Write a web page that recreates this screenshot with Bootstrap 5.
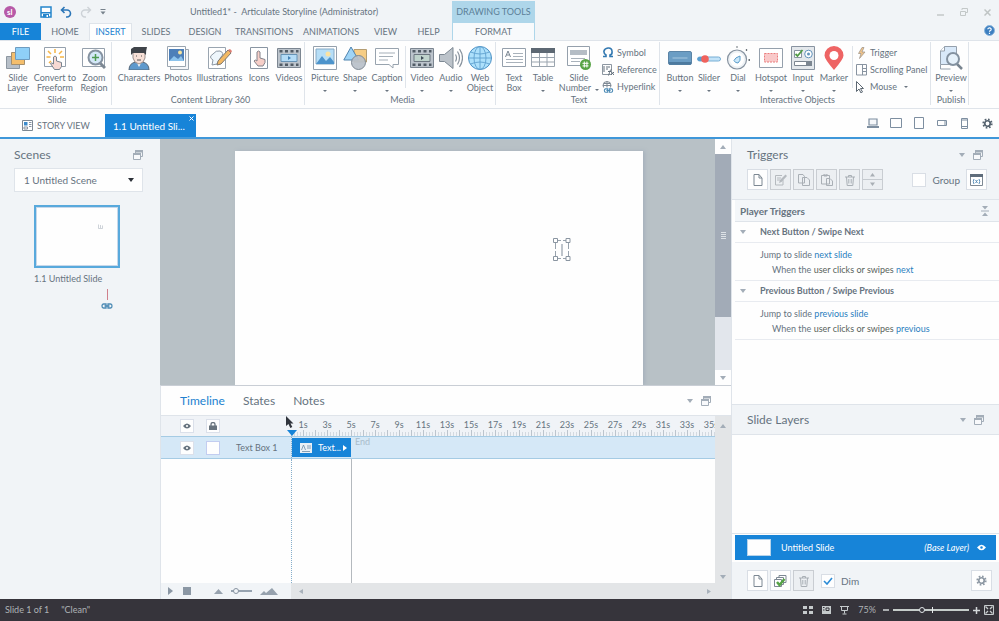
<!DOCTYPE html>
<html lang="en">
<head>
<meta charset="utf-8">
<meta name="viewport" content="width=device-width, initial-scale=1">
<title>Untitled1* - Articulate Storyline</title>
<link href="https://cdn.jsdelivr.net/npm/bootstrap@5.3.0/dist/css/bootstrap.min.css" rel="stylesheet">
<style>
:root{--ink:#66737f;--blue:#1784d8;--pane:#f1f4f7;--line:#dfe4ea;--mute:#a3adb8}
body{font-family:Lato,"Open Sans",sans-serif;font-size:9px;line-height:10px;color:var(--ink);background:#fefefe;overflow:hidden}
button,select,input{font:inherit;color:inherit}
button{background:none;border:0;padding:0;line-height:inherit}
svg{display:block;flex:none}
h1,h2,h3,p{font-size:inherit;margin:0;line-height:inherit;font-weight:inherit}
a{text-decoration:none;color:#2b7fc0}
.app-top{background:var(--pane);border-bottom:1px solid var(--line)}
.bar-title{height:23px}
.bar-tabs{height:16px}
.rtab{height:17px;color:var(--ink);text-align:center;position:relative;white-space:nowrap}
.rtab.file{background:var(--blue);color:#fff}
.rtab.on{background:#fefefe;color:#2181d0;border:1px solid var(--line);border-bottom:0}
.t40{width:41px}.t43{width:43px}.t48{width:48px}.t50{width:50px}.t66{width:66px}.t68{width:68px}
.main-head{width:452px}
.ctx{width:83px}
.ctx-name{height:22px;margin-top:1px;background:#aed6ea;color:#5b7f98}
.ctx-tab{height:17px;border:solid #aed6ea;border-width:0 1px;background:#f8fafc}
.quick{width:190px}
.ribbon{height:68px;border-bottom:1px solid var(--line)}
.grp{border-right:1px solid var(--line);padding:2px 0 0 3px;margin:1px 0 3px;flex:none}
.grp.wide{padding-left:5px}
.grp-name{margin-top:auto;text-align:center}
.rb{display:flex;flex-direction:column;align-items:center;white-space:nowrap;gap:3px;padding-top:2px}
.rb span{display:block}
.w28{width:28px}.w30{width:30px}.w33{width:34px}.w38{width:36px}.w44{width:44px}.w48{width:49px}
.car{width:0;height:0;border:2px solid transparent;border-top:2px solid #6a7580;border-bottom:0;display:inline-block}
.car.lg{border-width:3px;border-top-width:4px;border-top-color:var(--mute)}
.rb .car{margin-top:4px}
.small-cmd{display:flex;align-items:center;gap:3px;height:17px;white-space:nowrap}
.cmds{width:58px;padding-left:1px}
.cmds.wide-c{width:76px;padding-left:2px}
.rule{width:1px;background:var(--line);height:42px;margin:2px 1px 0}
.docs{height:30px;border-bottom:2px solid #3f97d9}
.doc-off{margin:0 15px 6px 22px}
.doc-on{background:var(--blue);color:#fff;width:91px;height:23px;font-size:10px}
.doc-x{top:2px;right:2px}
.devices{display:grid;grid-template-columns:repeat(6,23px);justify-items:center;align-items:center}
.left{width:160px;background:var(--pane);padding:8px 17px 0 14px}
.right{width:268px;background:#fefefe;border-left:1px solid var(--line)}
.pane-t{font-size:12px;line-height:16px}
.scene{width:100%;height:24px;border:1px solid var(--line);background:#fefefe;font-size:10px;padding:0 9px;appearance:none}
.scene-car{right:9px;top:10px;border-width:4px;border-top:4px solid #2c3038;border-bottom:0;border-left-width:3px;border-right-width:3px;pointer-events:none}
.scene-box{margin:5px 0 13px}
.thumbs{padding:0 22px 0 20px}
.thumb{width:86px;height:63px;border:2px solid #58a9dc;background:#fefefe;box-shadow:inset 0 0 0 1px #c8d8ea}
.thumb svg{left:75%;top:28%}
.thumb-t{padding:6px 0 5px}
.stage{height:246px}
.canvas{background:#b8c1c6;padding:12px 72px 0 75px}
.slide{background:#fefefe;box-shadow:2px 0 4px #a6b1bc}
.pick{left:78%;top:37%}
.mid{min-width:0}
.vbar{width:16px;background:#e2e6ec}
.vbar button{height:15px;background:#fefefe;width:100%}
.vthumb{background:#a2abb7;height:163px;width:100%}
.tri-u{width:0;height:0;border:3px solid transparent;border-bottom:4px solid var(--mute);border-top:0}
.tl{border-top:1px solid #c9ced5;border-left:1px solid var(--line)}
.tl-head{height:30px;border-bottom:1px solid var(--line)}
.tl-tabs{gap:18px;padding-left:19px}
.tl-tabs button{font-size:12px;line-height:16px}
.tl-tabs .cur{color:#2181d0}
.tl-side{width:130px;flex:none}
.rowhead{padding-left:19px;gap:12px}
.tl-rule{height:20px;background:#f0f3f7}
.ticks{height:6px;background:repeating-linear-gradient(90deg,#bcc4cd 0 1px,transparent 1px 12px),linear-gradient(#f0f3f7 0 2px,transparent 2px),repeating-linear-gradient(90deg,#d3d9e0 0 1px,transparent 1px 3px)}
.marks{display:grid;grid-template-columns:repeat(18,24px);text-align:center;padding-top:4px;height:14px}
.clip-x{overflow-x:clip;min-width:0}
.tl-row{height:23px;background:#d5e8f7;border:solid #a5cbe4;border-width:1px 0}
.sq{width:14px;height:14px;background:#fefefe;border:1px solid #dbe0ea;display:flex;align-items:center;justify-content:center;flex:none}
.sq.lav{border-color:#c3cdf0;appearance:none;margin:0}
.clip{width:59px;height:19px;margin-top:1px;background:var(--blue);color:#fff}
.track{border-left:1px dotted #86aecb}
.end-t{color:#a9bccb}
.life{width:60px;border-right:1px solid #b4b9be}
.head-mark{left:-4px;bottom:0;width:0;height:0;border:5px solid transparent;border-top:6px solid var(--blue);border-bottom:0}
.arrow{left:125px;top:30px;z-index:3}
.tl-side2{width:16px;flex:none;background:#e3e5e7;color:var(--mute)}
.tl-foot{height:16px;background:var(--pane)}
.tl-tools{padding-left:7px;gap:8px}
.stop-b{margin:0 15px 0 2px}
.hscroll{background:#e3e5e7}
.tbtn{width:21px;height:21px;border:1px solid #d9dee5;background:#fefefe;display:flex;align-items:center;justify-content:center;flex:none}
.tbtn.off{background:#eceff2;border-color:#c9cdd2}
.tools{gap:2px}
.trig-h{height:61px;background:var(--pane);border-bottom:1px solid var(--line);padding:8px 12px 0 15px}
.trig-row{margin-top:6px}
.trig-name{height:22px;background:#f3f6f9;border-bottom:1px solid var(--line);margin-left:3px;padding:0 10px 0 5px;font-size:10px;font-weight:700}
.trig-ev{height:21px;border-bottom:1px solid #e8ebf0;margin-left:3px;font-weight:700;padding-left:5px;gap:14px}
.trig-do{height:38px;border-bottom:1px solid #e8ebf0;margin-left:3px;line-height:15px;padding:4px 0 0 25px}
.grow{color:#59635c}
.lay-h{height:31px;background:var(--pane);border:solid var(--line);border-width:1px 0;padding:0 15px}
.lay-space{height:99px;border-bottom:1px solid var(--line)}
.lay-on{--hole:#1784d8;height:25px;margin:1px 3px 2px;padding:0 10px 0 12px;background:var(--blue);color:#fff}
.lay-th{width:24px;height:17px;background:#fefefe;border:1px solid #b7d3ea;margin-right:10px;flex:none}
.lay-f{height:37px;background:var(--pane);padding:0 7px 0 15px}
.tick-box{appearance:none;width:14px;height:14px;border:1px solid #d9dee5;background:#fefefe;margin:0}
.tick-over{left:2px;top:3px;pointer-events:none}
.dim-g{gap:6px;margin-left:5px;font-size:10px}
.soft{color:#8e99a4}
.dark{color:#56636f}
.status{height:22px;background:#36343b;color:#aeb3b6;padding:0 5px;gap:12px}
.views{gap:9px}
.zooms{gap:4px;margin-left:-5px}
input[type=range]{appearance:none;background:none;height:8px;margin:0;padding:0}
input[type=range]::-webkit-slider-runnable-track{height:2px;background:#c6cdca}
input[type=range]::-webkit-slider-thumb{appearance:none;width:6px;height:6px;border:1px solid #dfe4e6;border-radius:50%;background:#36343b;margin-top:-2px}
.zoom-r{width:76px}
.zoom-mid{left:39px;top:1px;width:1px;height:6px;background:#e8eaec}
input.tl-z{width:21px}
input.tl-z::-webkit-slider-runnable-track{background:#97a3b0}
input.tl-z::-webkit-slider-thumb{border:1px solid #8793a0;background:#f1f4f8}
</style>
<script src="https://cdn.jsdelivr.net/npm/bootstrap@5.3.0/dist/js/bootstrap.bundle.min.js"></script>
</head>
<body class="vh-100 d-flex flex-column">
<svg width="0" height="0" class="position-absolute">
<defs>
<symbol id="i-win" viewBox="0 0 10 10"><path d="M2.500 3V.5h7v6H8M2.500 2h7" fill="none" stroke="#a3adb8"/><path d="M.5 3.500h7v6h-7z" fill="#f8f9fb" stroke="#a3adb8"/><path d="M0 3h8v2H0zM2 0h8v2H2z" fill="#a3adb8"/></symbol>
<symbol id="i-eye" viewBox="0 0 8 6"><path d="M0 3Q4-2 8 3Q4 8 0 3Z" fill="currentColor"/><circle cx="4" cy="3" r="1.100" fill="var(--hole,#fff)"/></symbol>
<symbol id="i-page" viewBox="0 0 12 12"><path d="M2 .5h5L10 4v7.500H2zM7 .5V4h3" fill="none" stroke="#7d8893"/></symbol>
<symbol id="i-bin" viewBox="0 0 12 12"><path d="M1 3h10M4.500 3V1.500h3V3M2.500 3l.7 8.500h5.600l.7-8.500M4.800 5v4.500M7.200 5v4.500" fill="none" stroke="#a9afb5"/></symbol>
<symbol id="i-link" viewBox="0 0 12 6"><path d="M5 1H2.500a1.500 2 0 0 0 0 4H5zM7 1h2.500a1.500 2 0 0 1 0 4H7zM3.500 3h5" fill="none" stroke="#4d8bb5" stroke-width="1.300"/></symbol>
<symbol id="i-film" viewBox="0 0 24 24"><path d="M.5 2.500h23v19H.5z" fill="#bcc4cc" stroke="#7c8691"/><path d="M2.500 4h3v2.500h-3zM8 4h3v2.500H8zM13.500 4h3v2.500h-3zM19 4h2.500v2.500H19zM2.500 17.500h3V20h-3zM8 17.500h3V20H8zM13.500 17.500h3V20h-3zM19 17.500h2.500V20H19z" fill="#525c66"/></symbol>
<symbol id="i-gear" viewBox="0 0 12 12"><circle cx="6" cy="6" r="4.600" fill="none" stroke="currentColor" stroke-width="2" stroke-dasharray="1.800 1.810"/><circle cx="6" cy="6" r="3" fill="none" stroke="currentColor" stroke-width="1.900"/></symbol>
</defs>
</svg>

<header class="app-top d-flex">
  <div class="main-head">
    <div class="bar-title d-flex align-items-center">
      <div class="quick d-flex align-items-center ps-1">
        <svg width="12" height="12" viewBox="0 0 12 12"><circle cx="6" cy="6" r="6" fill="#b75aa8"/><text x="3" y="9" font-size="8" font-weight="700" fill="#fff">sl</text></svg>
        <button class="ms-4" aria-label="Save"><svg width="12" height="12" viewBox="0 0 12 12"><path d="M1 1h10v10H1z" fill="#fff" stroke="#2585cc" stroke-width="1.500"/><path d="M1 6h10v1.500H1zM3 8h6v3.500H3z" fill="#2585cc"/><path d="M6.500 9h1.500v2H6.500z" fill="#fff"/></svg></button>
        <button class="ms-2" aria-label="Undo"><svg width="12" height="12" viewBox="0 0 12 12"><path d="M4.500 1L1.500 4l3 3M2 4h5a3.500 3.500 0 0 1 0 7H6" fill="none" stroke="#2c76b8" stroke-width="1.600"/></svg></button>
        <button class="ms-2" aria-label="Redo"><svg width="12" height="12" viewBox="0 0 12 12"><path d="M7.500 1l3 3-3 3M10 4H5a3.500 3.500 0 0 0 0 7h1" fill="none" stroke="#cdd2d7" stroke-width="1.400"/></svg></button>
        <button class="ms-2" aria-label="Customize toolbar"><svg width="6" height="6" viewBox="0 0 6 6"><path d="M.5.500h5" stroke="#77828c"/><path d="M.5 2.500h5L3 5.500z" fill="#77828c"/></svg></button>
      </div>
      <h1>Untitled1* -&nbsp; Articulate Storyline (Administrator)</h1>
    </div>
    <nav class="bar-tabs d-flex">
      <button class="rtab file t40">FILE</button><button class="rtab t48">HOME</button><button class="rtab on t43">INSERT</button><button class="rtab t48">SLIDES</button><button class="rtab t50">DESIGN</button><button class="rtab t68">TRANSITIONS</button><button class="rtab t66">ANIMATIONS</button><button class="rtab t43">VIEW</button><button class="rtab t43">HELP</button>
    </nav>
  </div>
  <div class="ctx">
    <div class="ctx-name d-flex align-items-center justify-content-center text-nowrap">DRAWING TOOLS</div>
    <button class="ctx-tab w-100">FORMAT</button>
  </div>
  <div class="flex-grow-1 d-flex flex-column justify-content-between align-items-end">
    <div class="d-flex gap-3 pt-2 pe-2 align-items-center">
      <button aria-label="Minimize"><svg width="7" height="8" viewBox="0 0 7 8"><path d="M0 7h7" stroke="#c3c8c8" stroke-width="1.500"/></svg></button>
      <button aria-label="Restore"><svg width="8" height="8" viewBox="0 0 8 8"><path d="M2 2V.5h5.500v4H6M.5 3.500H5.500v4H.5z" fill="none" stroke="#c3c8c8"/></svg></button>
      <button aria-label="Close"><svg width="7" height="7" viewBox="0 0 7 7"><path d="M.5.500l6 6M6.500.500l-6 6" stroke="#bfc4c4" stroke-width="1.500"/></svg></button>
    </div>
    <button class="me-1 mb-1" aria-label="Help"><svg width="11" height="11" viewBox="0 0 11 11"><circle cx="5.500" cy="5.500" r="5" fill="#3d7fc0" stroke="#8bb5dc"/><path d="M3.800 4.300a1.700 1.500 0 1 1 2.300 1.400q-.6.300-.6 1M5.500 7.800v1.200" fill="none" stroke="#fff" stroke-width="1.200"/></svg></button>
  </div>
</header>

<section class="ribbon d-flex">
  <div class="grp d-flex flex-column">
    <div class="d-flex">
      <button class="rb w30"><svg width="24" height="24" viewBox="0 0 24 24"><path d="M.5 10.500h13v12H.5z" fill="#b7bfc8" stroke="#8d97a1"/><path d="M5.500 6.500h13v12h-13z" fill="#f4be6c" stroke="#a58f6d"/><path d="M9.500 1.500h14v12h-14z" fill="#8fd0f8" stroke="#6e9cc0"/></svg><span>Slide<br>Layer</span></button>
      <button class="rb w44"><svg width="24" height="24" viewBox="0 0 24 24"><path d="M1.500 1.500h21v19h-21z" fill="#fff" stroke="#95a0ac"/><path d="M12 3v4M5 5l3 3M19 5l-3 3M3.500 11h4M17 11h4M6 17l2-2" stroke="#f5b547" stroke-width="1.500"/><path d="M10.500 18V11q1.500-2 3 0v4l5 1.500v4l-2 3h-5l-4-6q1-1.500 3 .5z" fill="#f7d9d3" stroke="#78838e"/></svg><span>Convert to<br>Freeform</span></button>
      <button class="rb w33"><svg width="24" height="24" viewBox="0 0 24 24"><path d="M.5 2.500h22v18H.5z" fill="#fff" stroke="#95a0ac"/><path d="M18 17l5 5" stroke="#7d8893" stroke-width="3"/><circle cx="13.500" cy="11.500" r="7" fill="#d4e8f8" stroke="#8592a0" stroke-width="2"/><path d="M13.500 8v7M10 11.500h7" stroke="#4e9a51" stroke-width="1.500"/></svg><span>Zoom<br>Region</span></button>
    </div>
    <div class="grp-name">Slide</div>
  </div>
  <div class="grp wide d-flex flex-column">
    <div class="d-flex">
      <button class="rb w44"><svg width="24" height="24" viewBox="0 0 24 24"><path d="M2 24q0-7 7-8h6q7 1 7 8z" fill="#5f99cc" stroke="#56687a"/><path d="M9 15l3 6 3-6z" fill="#fff"/><path d="M6 6h12v6q-1 5-6 6-5-1-6-6z" fill="#f7dfd6" stroke="#9a8f8d"/><path d="M4 9V3l3-2h13q-1 3-1 8l-2-2H6z" fill="#3f4349"/><path d="M9 10h1M14 10h1M10 14h4" stroke="#555"/></svg><span>Characters</span></button>
      <button class="rb w33"><svg width="24" height="24" viewBox="0 0 24 24"><path d="M4.500 3.500h18v20h-18z" fill="#f3f5f8" stroke="#9aa5b0"/><path d="M1.500.500h18v20h-18z" fill="#fff" stroke="#9aa5b0"/><path d="M3 3h15v12H3z" fill="#4d7fb8"/><path d="M3 15l5-5 4 3 3-3 3 5z" fill="#8cc3ec"/><circle cx="14" cy="6.500" r="2" fill="#f6e4a0"/></svg><span>Photos</span></button>
      <button class="rb w48"><svg width="24" height="24" viewBox="0 0 24 24"><path d="M.5 1.500h17v21H.5z" fill="#fff" stroke="#9aa5b0"/><path d="M5 14q-5-3 0-6 3-4 7-3 5 2 1 6l-4 7-5 1z" fill="#eef6fc" stroke="#8d98a4"/><path d="M9 19l1-4 10-11 3 3-10 11z" fill="#f3b964" stroke="#7f7870"/><path d="M20 4l3 3 1-2-2-2z" fill="#df7e72"/></svg><span>Illustrations</span></button>
      <button class="rb w30"><svg width="18" height="24" viewBox="0 0 18 24"><path d="M.5 1.500h17v21H.5z" fill="#fff" stroke="#8995a2"/><path d="M7 15V6q1.500-2 3 0v6l5 1.500v3l-2 3.500H8l-4-5q1-2 3 0z" fill="#f7cfc8" stroke="#83838b"/></svg><span>Icons</span></button>
      <button class="rb w30"><svg width="24" height="24"><use href="#i-film"/><path d="M4 8.500h16v7H4z" fill="#b4dcf7" stroke="#6793b5"/><path d="M11 10v4l3-2z" fill="#4381b4"/></svg><span>Videos</span></button>
    </div>
    <div class="grp-name">Content Library 360</div>
  </div>
  <div class="grp wide d-flex flex-column">
    <div class="d-flex">
      <button class="rb w30"><svg width="24" height="24" viewBox="0 0 24 24"><path d="M.5.500h23v23H.5z" fill="#fff" stroke="#95a0ac"/><path d="M3 3h18v15H3z" fill="#b6def7" stroke="#86a9c4"/><path d="M3 18l6-8 4 5 4-4 4 5v2z" fill="#4d94cc"/><circle cx="15" cy="8" r="2.500" fill="#fae2a2"/></svg><span>Picture</span><i class="car"></i></button>
      <button class="rb w30"><svg width="24" height="24" viewBox="0 0 24 24"><path d="M11 3.500h12.500V16H11z" fill="#f6cd85" stroke="#b49d72"/><path d="M8 1l7.500 13H.8z" fill="#9fd4f6" stroke="#4f83ae"/><circle cx="15.500" cy="16.500" r="7" fill="#b9c1c9" fill-opacity=".93" stroke="#7f8993"/></svg><span>Shape</span><i class="car"></i></button>
      <button class="rb w33"><svg width="24" height="24" viewBox="0 0 24 24"><path d="M.5 2.500h23v16H18V22l-4-3.500H.5z" fill="#fff" stroke="#98a3ae"/><path d="M4 7h16M4 10.500h14M4 14h9" stroke="#a5afb8"/></svg><span>Caption</span><i class="car"></i></button>
      <div class="rule"></div>
      <button class="rb w30"><svg width="24" height="24"><use href="#i-film"/><path d="M4 8.500h16v7H4z" fill="#bfd3cc" stroke="#6c7680"/><path d="M11 10v4l3-2z" fill="#3f4d58"/></svg><span>Video</span><i class="car"></i></button>
      <button class="rb w28"><svg width="24" height="24" viewBox="0 0 24 24"><path d="M.5 8.500h5L14 1.500v21L5.500 15.500h-5z" fill="#bcc3ca" stroke="#7d8893"/><path d="M16.500 8.500q2 3.500 0 7M18.500 5.500q4 6.500 0 13M20.500 3q6 9 0 18" fill="none" stroke="#87929d" stroke-width="1.200"/></svg><span>Audio</span><i class="car"></i></button>
      <button class="rb w30"><svg width="24" height="24" viewBox="0 0 24 24"><circle cx="12" cy="12" r="11.500" fill="#ade0fb" stroke="#4d91c4"/><path d="M12 .5v23M.5 12h23M2.500 6q9.500 4 19 0M2.500 18q9.500-4 19 0" fill="none" stroke="#5fa0cf" stroke-width=".9"/><ellipse cx="12" cy="12" rx="6" ry="11.500" fill="none" stroke="#5fa0cf" stroke-width=".9"/></svg><span>Web<br>Object</span></button>
    </div>
    <div class="grp-name">Media</div>
  </div>
  <div class="grp d-flex flex-column">
    <div class="d-flex">
      <button class="rb w30"><svg width="24" height="24" viewBox="0 0 24 24"><path d="M.5 2.500h23v18H.5z" fill="#fff" stroke="#95a0ac"/><path d="M3.500 11L6 5l2.500 6M4.500 9h3" fill="none" stroke="#7a8692"/><path d="M11 7.500h10M11 10.500h10M4 13.500h17M4 16.500h17" stroke="#a9b2bb"/></svg><span>Text<br>Box</span></button>
      <button class="rb w28"><svg width="24" height="24" viewBox="0 0 24 24"><path d="M.5 2.500h23v18H.5zM8.500 6v14M16 6v14M1 11.500h22M1 16h22" fill="none" stroke="#9aa4ae"/><path d="M0 2h24v5H0z" fill="#5d6873"/></svg><span>Table</span><i class="car"></i></button>
      <button class="rb w44"><svg width="24" height="24" viewBox="0 0 24 24"><path d="M.5.500h22v19H.5z" fill="#fff" stroke="#95a0ac"/><path d="M3 4h17v5H3z" fill="#b5bdc5"/><path d="M4 12.500h14M4 15.500h9" stroke="#a9b2bb"/><circle cx="18.500" cy="18.500" r="5.500" fill="#57a345"/><path d="M17.300 15.500v6M19.900 15.500v6M15.500 17.300h6M15.500 19.900h6" stroke="#fff"/></svg><span>Slide<br>Number<i class="car ms-1 mb-0"></i></span></button>
      <div class="cmds">
        <button class="small-cmd"><svg width="12" height="11" viewBox="0 0 12 11"><path d="M1 9.500h3V8Q1.500 6.500 2 4T6 1t4 3-2 4v1.500h3" fill="none" stroke="#3379b1" stroke-width="1.600"/></svg>Symbol</button>
        <button class="small-cmd"><svg width="12" height="12" viewBox="0 0 12 12"><path d="M.5.500h9v10h-9z" fill="none" stroke="#8d97a1"/><path d="M2 2v6M4 3h4M4 5h2M6 11.500q1 0 1.500-3t2-3M6 7.500h3M9.500 8l2.500 3M12 8l-3 3" stroke="#65717c" fill="none"/></svg>Reference</button>
        <button class="small-cmd"><svg width="12" height="12" viewBox="0 0 12 12"><circle cx="5" cy="4.500" r="4" fill="none" stroke="#7f8994"/><path d="M1 4.500h8M5 .5v8M2 2.500h6" stroke="#7f8994"/><path d="M1 6.500h11v5.500H1z" fill="#fff"/><use href="#i-link" x="1" y="7" width="11" height="5"/></svg>Hyperlink</button>
      </div>
    </div>
    <div class="grp-name">Text</div>
  </div>
  <div class="grp wide d-flex flex-column">
    <div class="d-flex">
      <button class="rb w30"><svg width="24" height="24" viewBox="0 0 24 24"><rect x=".5" y="5.500" width="23" height="13" rx="1.500" fill="#6b9dc4" stroke="#5b84a6"/><path d="M1 16h22v2.500H1z" fill="#4d7a9f"/><path d="M4.500 12h15" stroke="#a9c8df"/></svg><span>Button</span><i class="car"></i></button>
      <button class="rb w28"><svg width="24" height="24" viewBox="0 0 24 24"><rect x=".5" y="11" width="23" height="4" rx="2" fill="#c3e3f8" stroke="#77aed4"/><rect x=".5" y="11" width="8" height="4" rx="2" fill="#5a9fd0"/><circle cx="8" cy="13" r="3.800" fill="#f0625c"/></svg><span>Slider</span><i class="car"></i></button>
      <button class="rb w30"><svg width="24" height="24" viewBox="0 0 24 24"><circle cx="11" cy="13.500" r="9.500" fill="#eef2f5" stroke="#8793a0" stroke-width="1.200"/><circle cx="11" cy="13.500" r="7" fill="#fff"/><path d="M14 10q1 5-2 7-3 0-4-2.500 1-3 6-4.500z" fill="#cbe8fa" stroke="#5b9cc9"/><path d="M10.500 1h1M20 4.500l1-1M22.500 14h1.500" stroke="#3f4850" stroke-width="1.400"/></svg><span>Dial</span><i class="car"></i></button>
      <button class="rb w38"><svg width="24" height="24" viewBox="0 0 24 24"><path d="M.5 2.500h23v19H.5z" fill="#fff" stroke="#95a0ac"/><path d="M5.500 7.500h13v8.500h-13z" fill="#f9c9c9" stroke="#ea7c7c" stroke-dasharray="2 1"/></svg><span>Hotspot</span><i class="car"></i></button>
      <button class="rb w28"><svg width="24" height="24" viewBox="0 0 24 24"><path d="M.5.500h23v23H.5z" fill="#e4e8ec" stroke="#8893a0"/><path d="M3.500 4.500h7v7h-7z" fill="#fff" stroke="#8893a0"/><path d="M4.500 8l2 2 5-6" fill="none" stroke="#519b45" stroke-width="1.800"/><circle cx="17.500" cy="8" r="3.800" fill="#fff" stroke="#6393bb"/><circle cx="17.500" cy="8" r="1.500" fill="#6393bb"/><path d="M3.500 15.500h17v4h-17z" fill="#fff" stroke="#7c8691"/><path d="M15 15h6v5h-6z" fill="#7c8691"/></svg><span>Input</span><i class="car"></i></button>
      <button class="rb w33"><svg width="24" height="24" viewBox="0 0 24 24"><path d="M12 24Q2.500 13 2.500 9.500a9.500 9.500 0 0 1 19 0Q21.500 13 12 24z" fill="#ee6464"/><circle cx="12" cy="9.500" r="4.500" fill="#fff"/></svg><span>Marker</span><i class="car"></i></button>
      <div class="rule"></div>
      <div class="cmds wide-c">
        <button class="small-cmd"><svg width="11" height="12" viewBox="0 0 11 12"><path d="M6 .5L2.500 6.500H5L3.500 11.500 9 5H6L8 .5z" fill="#f0c48b" stroke="#9a9186" stroke-width=".7"/></svg>Trigger</button>
        <button class="small-cmd"><svg width="11" height="12" viewBox="0 0 11 12"><path d="M.5.500h10v10.500H.5zM6.500 1v10M7 4.500h3M7 7.500h3" fill="none" stroke="#8893a0"/></svg>Scrolling Panel</button>
        <button class="small-cmd"><svg width="11" height="12" viewBox="0 0 11 12"><path d="M.5.500v10l2.500-2.500 2 4 1.500-1-2-3.500h3z" fill="#fff" stroke="#5d6873"/></svg>Mouse <i class="car ms-1"></i></button>
      </div>
    </div>
    <div class="grp-name">Interactive Objects</div>
  </div>
  <div class="grp d-flex flex-column">
    <button class="rb w33"><svg width="24" height="24" viewBox="0 0 24 24"><path d="M5.500.500h12v18h-16V5z" fill="#d9e9f9" stroke="#95a0ac"/><path d="M1.500 5h4V.5" fill="#fff" stroke="#95a0ac"/><path d="M18 18l5 5" stroke="#78848f" stroke-width="2.500"/><circle cx="14" cy="13" r="6" fill="#e6f1fa" stroke="#8492a0" stroke-width="2"/><path d="M1.500 18.500V23h10" fill="none" stroke="#95a0ac"/></svg><span>Preview</span><i class="car"></i></button>
    <div class="grp-name">Publish</div>
  </div>
</section>

<nav class="docs d-flex align-items-end">
  <button class="doc-off d-flex align-items-center gap-1"><svg width="11" height="11" viewBox="0 0 11 11"><path d="M.5.500h10v10H.5z" fill="#fff" stroke="#7d8893"/><path d="M2 2h3.500v3.500H2z" fill="#3b8acb"/><path d="M7 2.500h2.500M7 4.500h2.500M7 6.500h2.500M2 7h3.500v2H2z" stroke="#8893a0" fill="none"/></svg>STORY VIEW</button>
  <button class="doc-on position-relative text-start ps-2">1.1 Untitled Sli...<svg class="doc-x position-absolute" width="5" height="5" viewBox="0 0 5 5"><path d="M.5.500l4 4M4.500.500l-4 4" stroke="#fff"/></svg></button>
  <div class="devices ms-auto align-self-center">
    <button aria-label="Laptop"><svg width="12" height="10" viewBox="0 0 12 10"><path d="M2 1h8v6H2z" fill="#f5f7fa" stroke="#7d8ea0" stroke-width="1.200"/><path d="M0 9h12" stroke="#7d8ea0" stroke-width="2"/></svg></button>
    <button aria-label="Tablet landscape"><svg width="12" height="10" viewBox="0 0 12 10"><path d="M.5.500h11v9H.5z" fill="none" stroke="#7d8ea0"/></svg></button>
    <button aria-label="Tablet portrait"><svg width="10" height="12" viewBox="0 0 10 12"><path d="M.5.500h9v11h-9z" fill="none" stroke="#7d8ea0"/></svg></button>
    <button aria-label="Phone landscape"><svg width="10" height="6" viewBox="0 0 10 6"><path d="M.5.500h9v5h-9zM8 1v4" fill="none" stroke="#7d8ea0"/></svg></button>
    <button aria-label="Phone portrait"><svg width="7" height="11" viewBox="0 0 7 11"><path d="M.5.500h6v10h-6zM1 2h5M1 8.500h5" fill="none" stroke="#7d8ea0"/></svg></button>
    <button class="dark" aria-label="Player settings"><svg width="11" height="11"><use href="#i-gear"/></svg></button>
  </div>
</nav>

<main class="flex-grow-1 d-flex">
  <aside class="left flex-shrink-0">
    <div class="d-flex justify-content-between align-items-center"><h2 class="pane-t">Scenes</h2><button aria-label="Undock"><svg width="10" height="10"><use href="#i-win"/></svg></button></div>
    <div class="scene-box position-relative"><select class="scene" aria-label="Scene"><option>1 Untitled Scene</option></select><i class="car scene-car position-absolute"></i></div>
    <div class="thumbs">
      <div class="thumb position-relative"><svg class="position-absolute" width="5" height="5" viewBox="0 0 5 5"><path d="M.5.500v4h4V1.500M2.500 1v3" fill="none" stroke="#b9c0c8" stroke-width=".7"/></svg></div>
      <p class="thumb-t">1.1 Untitled Slide</p>
      <svg class="ms-auto me-2" width="12" height="20" viewBox="0 0 12 20"><path d="M6.500 0v11" stroke="#d0808c"/><use href="#i-link" y="14" width="12" height="6"/></svg>
    </div>
  </aside>

  <div class="mid flex-grow-1 d-flex flex-column">
    <section class="stage d-flex">
      <div class="canvas flex-grow-1 d-flex overflow-hidden">
        <div class="slide flex-grow-1 position-relative">
          <svg class="pick position-absolute" width="18" height="24" viewBox="0 0 18 24"><path d="M2.500 5v14M15.500 5v14" stroke="#98a2ad" stroke-dasharray="6 2"/><path d="M5 2.500h8M5 20.500h8" stroke="#98a2ad" stroke-dasharray="3 2"/><path d="M9 6v12" stroke="#7f8a98"/><path d="M.5.500h4v4h-4zM13 .5h4v4h-4zM.5 18.500h4v4h-4zM13 18.500h4v4h-4z" fill="#fff" stroke="#8a95a1"/></svg>
        </div>
      </div>
      <div class="vbar d-flex flex-column flex-shrink-0">
        <button class="d-flex align-items-center justify-content-center" aria-label="Scroll up"><i class="tri-u"></i></button>
        <div class="vthumb d-flex align-items-center justify-content-center"><svg width="5" height="7" viewBox="0 0 5 7"><path d="M0 .5h5M0 2.500h5M0 4.500h5M0 6.500h5" stroke="#dde2e6"/></svg></div>
        <button class="mt-auto d-flex align-items-center justify-content-center" aria-label="Scroll down"><i class="car lg"></i></button>
      </div>
    </section>

    <section class="tl flex-grow-1 d-flex flex-column position-relative">
      <svg class="arrow position-absolute" width="8" height="12" viewBox="0 0 8 12"><path d="M0 0v10l2.500-2 1.800 4 2-1-1.800-3.500h3z" fill="#30343c"/></svg>
      <div class="tl-head d-flex align-items-center">
        <div class="tl-tabs d-flex"><button class="cur">Timeline</button><button>States</button><button>Notes</button></div>
        <div class="ms-auto me-3 pe-1 d-flex align-items-center gap-2"><i class="car lg"></i><button aria-label="Undock timeline"><svg width="10" height="10"><use href="#i-win"/></svg></button></div>
      </div>
      <div class="flex-grow-1 d-flex">
        <div class="flex-grow-1 d-flex flex-column clip-x">
          <div class="tl-rule d-flex">
            <div class="tl-side rowhead d-flex align-items-center"><button class="sq" aria-label="Show all"><svg width="8" height="6"><use href="#i-eye"/></svg></button><button class="sq" aria-label="Lock all"><svg width="8" height="8" viewBox="0 0 8 8"><path d="M0 3.500h8V8H0z" fill="#69747e"/><path d="M2 4V2.500a2 2 0 0 1 4 0V4" fill="none" stroke="#69747e" stroke-width="1.300"/></svg></button></div>
            <div class="flex-grow-1 position-relative">
              <div class="marks"><span>1s</span><span>3s</span><span>5s</span><span>7s</span><span>9s</span><span>11s</span><span>13s</span><span>15s</span><span>17s</span><span>19s</span><span>21s</span><span>23s</span><span>25s</span><span>27s</span><span>29s</span><span>31s</span><span>33s</span><span>35s</span></div>
              <div class="ticks"></div>
              <i class="head-mark position-absolute"></i>
            </div>
          </div>
          <div class="tl-row d-flex">
            <div class="tl-side rowhead d-flex align-items-center"><button class="sq" aria-label="Show Text Box 1"><svg width="8" height="6"><use href="#i-eye"/></svg></button><input type="checkbox" class="sq lav" aria-label="Lock Text Box 1"><span class="ps-1 text-nowrap">Text Box 1</span></div>
            <div class="track flex-grow-1 d-flex">
              <div class="clip d-flex align-items-center justify-content-between px-1"><svg class="ms-1" width="12" height="10" viewBox="0 0 12 10"><path d="M0 0h12v10H0z" fill="#e9eff5"/><path d="M1.500 7L3.500 2l2 5M7 3h4M7 5h4M2 8.500h8" fill="none" stroke="#6c8ba6" stroke-width=".8"/></svg><span class="ps-1">Text...</span><svg width="4" height="6" viewBox="0 0 4 6"><path d="M0 0l4 3-4 3z" fill="#fff"/></svg></div>
              <span class="ps-1 end-t">End</span>
            </div>
          </div>
          <div class="flex-grow-1 d-flex"><div class="tl-side"></div><div class="track flex-grow-1 d-flex"><div class="life"></div></div></div>
        </div>
        <div class="tl-side2 d-flex flex-column justify-content-between align-items-center py-1"><i class="tri-u mt-1"></i><i class="car lg"></i></div>
      </div>
      <div class="tl-foot d-flex">
        <div class="tl-side tl-tools d-flex align-items-center">
          <button aria-label="Play"><svg width="5" height="8" viewBox="0 0 5 8"><path d="M0 0l5 4-5 4z" fill="#8b97a4"/></svg></button>
          <button class="stop-b" aria-label="Stop"><svg width="8" height="8" viewBox="0 0 8 8"><path d="M0 0h8v8H0z" fill="#8b97a4"/></svg></button>
          <button aria-label="Zoom out"><svg width="9" height="5" viewBox="0 0 9 5"><path d="M0 5l4.500-5L9 5z" fill="#97a2ae"/></svg></button>
          <input class="tl-z" type="range" value="15" aria-label="Timeline zoom">
          <button aria-label="Zoom in"><svg width="18" height="7" viewBox="0 0 18 7"><path d="M0 7l4-4 2 2 6-5 6 7z" fill="#97a2ae"/></svg></button>
        </div>
        <div class="hscroll flex-grow-1 d-flex align-items-center justify-content-between px-1"><svg class="ms-1" width="4" height="5" viewBox="0 0 4 5"><path d="M4 0L0 2.500 4 5z" fill="#a9b2bb"/></svg><svg width="4" height="5" viewBox="0 0 4 5"><path d="M0 0l4 2.500L0 5z" fill="#a9b2bb"/></svg></div>
        <div class="tl-side2 hscroll"></div>
      </div>
    </section>
  </div>

  <aside class="right d-flex flex-column flex-shrink-0">
    <div class="trig-h">
      <div class="d-flex align-items-center gap-2 pe-1"><h2 class="pane-t me-auto">Triggers</h2><i class="car lg"></i><button aria-label="Undock triggers"><svg width="10" height="10"><use href="#i-win"/></svg></button></div>
      <div class="trig-row tools d-flex align-items-center">
        <button class="tbtn" aria-label="New trigger"><svg width="12" height="12"><use href="#i-page"/></svg></button>
        <button class="tbtn off" aria-label="Edit trigger"><svg width="13" height="12" viewBox="0 0 13 12"><path d="M9 6v5H1.500V1.500H8M3 4h4M3 6h3" fill="none" stroke="#b5babf"/><path d="M5 9l1-3 5.500-5.500 1.500 1.500L7.500 8z" fill="#b5babf"/></svg></button>
        <button class="tbtn off" aria-label="Copy trigger"><svg width="12" height="12" viewBox="0 0 12 12"><path d="M.5.500H5l1.500 2V9h-6zM4.500 3.500H9l2.500 2.500v5.500h-7z" fill="#eceff2" stroke="#a9afb5"/></svg></button>
        <button class="tbtn off" aria-label="Paste trigger"><svg width="12" height="12" viewBox="0 0 12 12"><path d="M.5 1.500h8V10h-8zM3 0h3v2H3zM5.500 4.500H9l2.500 2.500v4.500h-6z" fill="#eceff2" stroke="#a9afb5"/></svg></button>
        <button class="tbtn off" aria-label="Delete trigger"><svg width="12" height="12"><use href="#i-bin"/></svg></button>
        <button class="tbtn off" aria-label="Reorder trigger"><svg width="19" height="15" viewBox="0 0 19 15"><path d="M0 7.500h19" stroke="#c5cacf"/><path d="M7 4.500L9.500 1 12 4.500zM7 10.500l2.500 3.500 2.500-3.500z" fill="#a9afb5"/></svg></button>
        <span class="dim-g ms-auto me-1 d-flex align-items-center"><input type="checkbox" class="tick-box" id="grp"><label for="grp">Group</label></span>
        <button class="tbtn" aria-label="Variables"><svg width="13" height="12" viewBox="0 0 13 12"><path d="M.5.500h12v11H.5z" fill="#fff" stroke="#7d8893"/><path d="M0 0h13v3H0z" fill="#5f6d7b"/><path d="M4 5q-1.500 2.500 0 5M9 5q1.500 2.500 0 5M5.500 6l2 3M7.500 6l-2 3" fill="none" stroke="#5b8fb8"/></svg></button>
      </div>
    </div>
    <div class="trig-name d-flex align-items-center justify-content-between"><h3>Player Triggers</h3><svg width="8" height="10" viewBox="0 0 8 10"><path d="M1 0h6L4 3.500zM1 10h6L4 6.500z" fill="#a3adb8"/><path d="M0 5h8" stroke="#a3adb8"/></svg></div>
    <div class="trig-ev d-flex align-items-center"><i class="car lg"></i>Next Button / Swipe Next</div>
    <div class="trig-do">Jump to slide <a href="#">next slide</a><br><span class="ps-2 ms-1">When the <span class="grow">user clicks or swipes</span> <a href="#">next</a></span></div>
    <div class="trig-ev d-flex align-items-center"><i class="car lg"></i>Previous Button / Swipe Previous</div>
    <div class="trig-do">Jump to slide <a href="#">previous slide</a><br><span class="ps-2 ms-1">When the <span class="grow">user clicks or swipes</span> <a href="#">previous</a></span></div>
    <div class="lay-h mt-auto d-flex align-items-center gap-2"><h2 class="pane-t me-auto">Slide Layers</h2><i class="car lg"></i><button aria-label="Undock layers"><svg width="10" height="10"><use href="#i-win"/></svg></button></div>
    <div class="lay-space"></div>
    <div class="lay-on d-flex align-items-center"><span class="lay-th"></span><span>Untitled Slide</span><em class="ms-auto me-2">(Base Layer)</em><button aria-label="Show base layer"><svg width="9" height="7"><use href="#i-eye"/></svg></button></div>
    <div class="lay-f tools d-flex align-items-center">
      <button class="tbtn" aria-label="New layer"><svg width="12" height="12"><use href="#i-page"/></svg></button>
      <button class="tbtn" aria-label="Duplicate layer"><svg width="13" height="12" viewBox="0 0 13 12"><path d="M.5 4.500h7v7h-7zM2.500 4V2.500h7v7H8M5 2V.5h7v7h-2" fill="none" stroke="#7d8893"/><path d="M3 7l2.500 3 5-6" fill="none" stroke="#56a346" stroke-width="2.500"/></svg></button>
      <button class="tbtn off" aria-label="Delete layer"><svg width="12" height="12"><use href="#i-bin"/></svg></button>
      <span class="dim-g position-relative d-flex align-items-center"><input type="checkbox" class="tick-box" id="dim" checked><svg class="tick-over position-absolute" width="10" height="8" viewBox="0 0 10 8"><path d="M1 4l3 3 5-6" fill="none" stroke="#2b8bd6" stroke-width="1.600"/></svg><label for="dim">Dim</label></span>
      <button class="tbtn soft ms-auto" aria-label="Layer properties"><svg width="11" height="11"><use href="#i-gear"/></svg></button>
    </div>
  </aside>
</main>

<footer class="status d-flex align-items-center">
  <span>Slide 1 of 1</span><span>"Clean"</span>
  <div class="views ms-auto d-flex align-items-center">
    <button aria-label="Grid view"><svg width="10" height="8" viewBox="0 0 10 8"><path d="M0 0h4v3H0zM6 0h4v3H6zM0 5h4v3H0zM6 5h4v3H6z" fill="#c5cacc"/></svg></button>
    <button aria-label="Normal view"><svg width="9" height="8" viewBox="0 0 9 8"><path d="M0 0h9v8H0z" fill="#c5cacc"/><path d="M1 1.500h1.500M1 4h1.500M4 2h3v2.500H4z" stroke="#36343b" fill="none"/></svg></button>
    <button aria-label="Slide show"><svg width="9" height="9" viewBox="0 0 9 9"><path d="M0 .5h9M1.500 1v3.500h6V1M4.500 4.500v3M2.500 8h4" fill="none" stroke="#c5cacc"/></svg></button>
    <span>75%</span>
  </div>
  <div class="zooms d-flex align-items-center">
    <button aria-label="Zoom out"><svg width="6" height="6" viewBox="0 0 6 6"><path d="M0 3h6" stroke="#d3d7d9" stroke-width="1.500"/></svg></button>
    <span class="position-relative d-flex"><input class="zoom-r" type="range" value="37" aria-label="Zoom"><i class="zoom-mid position-absolute"></i></span>
    <button aria-label="Zoom in"><svg width="7" height="7" viewBox="0 0 7 7"><path d="M0 3.500h7M3.500 0v7" stroke="#d3d7d9" stroke-width="1.500"/></svg></button>
    <button aria-label="Fit"><svg width="10" height="10" viewBox="0 0 10 10"><path d="M.5.500h9v9h-9z" fill="none" stroke="#c5cacc"/><path d="M1.500 1.500l2.500 2.500M8.500 1.500L6 4M1.500 8.500L4 6M8.500 8.500L6 6" stroke="#c5cacc" stroke-width="1.300"/></svg></button>
  </div>
</footer>
</body>
</html>
